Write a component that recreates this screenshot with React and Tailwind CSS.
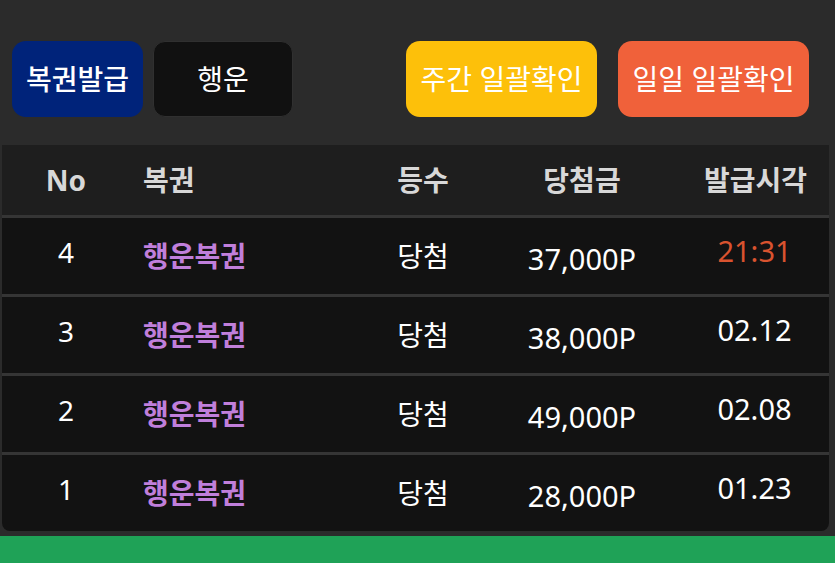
import React from "react";

const rows = [
  { no: 4, name: "행운복권", rank: "당첨", prize: "37,000P", time: "21:31", today: true },
  { no: 3, name: "행운복권", rank: "당첨", prize: "38,000P", time: "02.12" },
  { no: 2, name: "행운복권", rank: "당첨", prize: "49,000P", time: "02.08" },
  { no: 1, name: "행운복권", rank: "당첨", prize: "28,000P", time: "01.23" },
];

const App = () => {
  return (
    <div
      className="w-[835px] h-[563px] bg-[#2b2b2b] flex flex-col overflow-hidden"
      style={{ fontFamily: '"Noto Sans", "Noto Sans CJK KR", sans-serif' }}
    >
      {/* top buttons */}
      <div className="flex items-center pt-[41px] pl-[12px] pr-[26px]">
        <button className="w-[131px] h-[76px] rounded-[14px] bg-[#00237a] text-white text-[28px] font-medium">
          복권발급
        </button>
        <button className="ml-[10px] w-[140px] h-[76px] rounded-[12px] bg-[#111111] border border-[#303030] text-white text-[28px]">
          행운
        </button>
        <div className="flex-1" />
        <button className="w-[191px] h-[76px] rounded-[14px] bg-[#fdc00a] text-white text-[28px]">
          주간 일괄확인
        </button>
        <button className="ml-[21px] w-[191px] h-[76px] rounded-[14px] bg-[#f0613a] text-white text-[28px]">
          일일 일괄확인
        </button>
      </div>

      {/* table */}
      <div className="mt-[28px] ml-[2px] w-[827px] rounded-b-[8px] overflow-hidden">
        <div className="flex h-[70px] bg-[#1e1e1e] text-[#d8d8d8] text-[28px] font-bold items-center">
          <div className="w-[128px] text-center">No</div>
          <div className="w-[220px] pl-[13px]">복권</div>
          <div className="w-[146px] text-center">등수</div>
          <div className="w-[172px] text-center">당첨금</div>
          <div className="flex-1 text-center pl-[14px]">발급시각</div>
        </div>
        {rows.map((r) => (
          <div
            key={r.no}
            className="flex h-[79px] bg-[#121212] border-t-[3px] border-[#353535] text-white text-[28px] items-center"
          >
            <div className="w-[128px] text-center pb-[8px]">{r.no}</div>
            <div className="w-[220px] pl-[13px] text-[#c07fdb] font-bold">{r.name}</div>
            <div className="w-[146px] text-center">{r.rank}</div>
            <div className="w-[172px] text-center pt-[6px] text-[29px]">{r.prize}</div>
            <div
              className={
                "flex-1 text-center pl-[12px] pb-[10px] text-[29px] " +
                (r.today ? "text-[#d9532f]" : "text-white")
              }
            >
              {r.time}
            </div>
          </div>
        ))}
      </div>

      <div className="mt-auto h-[27px] bg-[#1fa257]" />
    </div>
  );
};

export default App;
